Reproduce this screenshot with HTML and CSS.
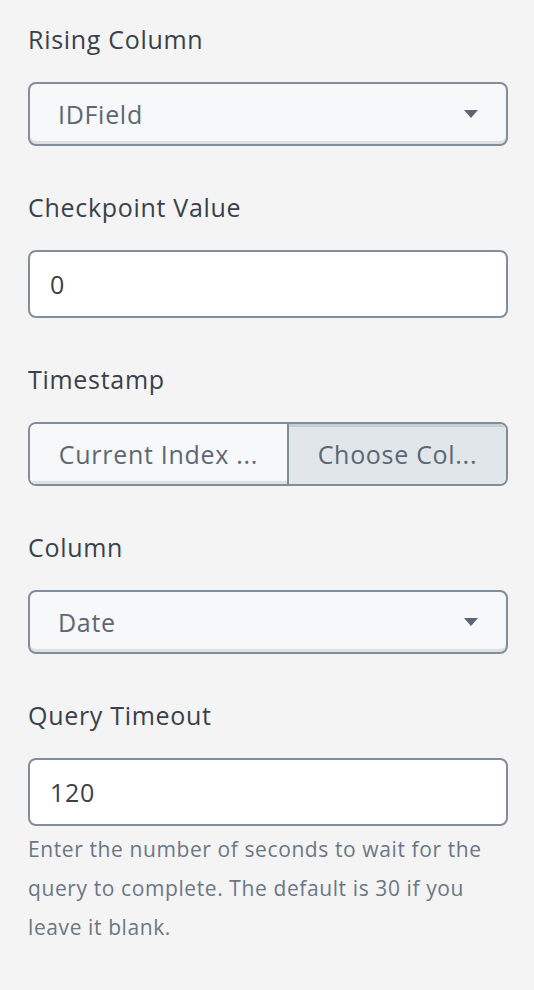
FILE: index.html
```html
<!DOCTYPE html>
<html>
<head>
<meta charset="utf-8">
<link rel="stylesheet" href="styles.css">
</head>
<body>
<div class="form">
  <div class="field">
    <div class="label">Rising Column</div>
    <div class="select">
      <span class="select-text">IDField</span>
      <svg class="caret" width="14" height="8" viewBox="0 0 14 8"><path d="M0 0 H14 L7 8 Z" fill="#5c6773"/></svg>
    </div>
  </div>
  <div class="field">
    <div class="label">Checkpoint Value</div>
    <div class="input">0</div>
  </div>
  <div class="field">
    <div class="label">Timestamp</div>
    <div class="btn-group">
      <div class="btn">Current Index ...</div>
      <div class="btn btn-active">Choose Col...</div>
    </div>
  </div>
  <div class="field">
    <div class="label">Column</div>
    <div class="select">
      <span class="select-text">Date</span>
      <svg class="caret" width="14" height="8" viewBox="0 0 14 8"><path d="M0 0 H14 L7 8 Z" fill="#5c6773"/></svg>
    </div>
  </div>
  <div class="field">
    <div class="label">Query Timeout</div>
    <div class="input">120</div>
    <div class="help">Enter the number of seconds to wait for the query to complete. The default is 30 if you leave it blank.</div>
  </div>
</div>
</body>
</html>
```

FILE: styles.css
```css
html, body {
  margin: 0;
  padding: 0;
  background: #f4f4f4;
}
body {
  font-family: "Open Sans", "Liberation Sans", sans-serif;
}
.form {
  width: 480px;
  padding: 23px 0 0 28px;
}
.field {
  margin-bottom: 45px;
}
.label {
  font-size: 25px;
  line-height: 32px;
  letter-spacing: 0.7px;
  color: #39414a;
  margin-bottom: 27px;
}
.select {
  box-sizing: border-box;
  height: 64px;
  border: 2px solid #818d99;
  border-radius: 8px;
  background: #f7f8fa;
  box-shadow: inset 0 -3px 0 #dde1e6;
  display: flex;
  align-items: center;
  justify-content: space-between;
  padding: 0 28px 0 28px;
}
.select-text {
  font-size: 25px;
  letter-spacing: 0.7px;
  color: #5c6773;
}
.caret {
  display: block;
}
.input {
  box-sizing: border-box;
  height: 68px;
  border: 2px solid #818d99;
  border-radius: 8px;
  background: #ffffff;
  display: flex;
  align-items: center;
  padding-left: 20px;
  font-size: 25px;
  letter-spacing: 0.7px;
  color: #39414a;
}
.btn-group {
  box-sizing: border-box;
  height: 64px;
  border: 2px solid #818d99;
  border-radius: 8px;
  display: flex;
  overflow: hidden;
}
.btn {
  flex: 1 1 auto;
  display: flex;
  align-items: center;
  justify-content: center;
  font-size: 25px;
  letter-spacing: 0.7px;
  color: #5c6773;
  background: #f7f8fa;
  box-shadow: inset 0 -3px 0 #dde1e6;
}
.btn + .btn {
  border-left: 2px solid #818d99;
}
.btn-active {
  background: #e1e6eb;
  box-shadow: inset 0 3px 0 #c7ced6;
}
.help {
  margin-top: 4px;
  font-size: 21px;
  line-height: 39px;
  letter-spacing: 0.6px;
  color: #6b7785;
}
```
